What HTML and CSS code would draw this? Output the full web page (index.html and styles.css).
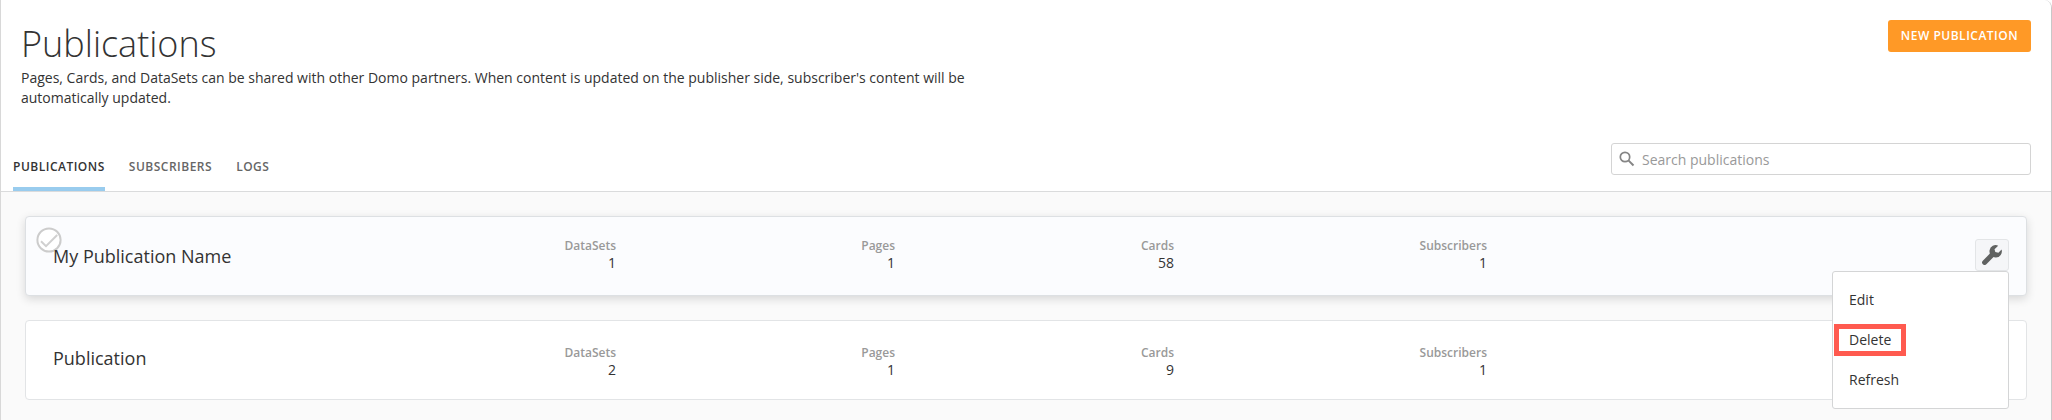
FILE: index.html
```html
<!DOCTYPE html>
<html lang="en">
<head>
<meta charset="utf-8">
<title>Publications</title>
<link rel="stylesheet" href="styles.css">
</head>
<body>
<main class="panel">
  <header class="header">
    <div class="intro">
      <h1 class="title">Publications</h1>
      <p class="description">Pages, Cards, and DataSets can be shared with other Domo partners. When content is updated on the publisher side, subscriber's content will be automatically updated.</p>
    </div>
    <nav class="tabs">
      <a class="tab tab-active">PUBLICATIONS</a>
      <a class="tab">SUBSCRIBERS</a>
      <a class="tab">LOGS</a>
    </nav>
    <div class="actions">
      <button class="new-button">NEW PUBLICATION</button>
      <label class="search">
        <svg class="search-icon" viewBox="0 0 16 16" width="16" height="16"><circle cx="6" cy="6" r="4.7" fill="none" stroke="#858585" stroke-width="1.7"/><path d="M9.4 9.4 14.5 14.5" stroke="#858585" stroke-width="2"/></svg>
        <input class="search-input" type="text" placeholder="Search publications">
      </label>
    </div>
  </header>
  <section class="list">
    <article class="card card-hover">
      <svg class="check" viewBox="0 0 26 26" width="26" height="26"><circle cx="13" cy="13" r="11.6" fill="#fff" stroke="#ccc" stroke-width="2"/><path d="M5 14.2 10 19.2 21.2 8" fill="none" stroke="#d0d0d0" stroke-width="2"/></svg>
      <h2 class="name">My Publication Name</h2>
      <dl class="stat"><dt>DataSets</dt><dd>1</dd></dl>
      <dl class="stat"><dt>Pages</dt><dd>1</dd></dl>
      <dl class="stat"><dt>Cards</dt><dd>58</dd></dl>
      <dl class="stat"><dt>Subscribers</dt><dd>1</dd></dl>
      <div class="tools">
        <button class="wrench-button" aria-label="Options">
          <svg viewBox="0 0 20 20" width="20" height="20"><path d="M2.6 17.4 10.5 9.5" stroke="#606261" stroke-width="5" stroke-linecap="round"/><path d="M16.2.7A6.2 6.2 0 1 0 19.6 4.600L16.400 7.800 13.300 7 12.500 4.200Z" fill="#606261"/></svg>
        </button>
        <div class="menu">
          <a class="menu-item">Edit</a>
          <a class="menu-item menu-marked">Delete</a>
          <a class="menu-item">Refresh</a>
        </div>
      </div>
    </article>
    <article class="card">
      <h2 class="name">Publication</h2>
      <dl class="stat"><dt>DataSets</dt><dd>2</dd></dl>
      <dl class="stat"><dt>Pages</dt><dd>1</dd></dl>
      <dl class="stat"><dt>Cards</dt><dd>9</dd></dl>
      <dl class="stat"><dt>Subscribers</dt><dd>1</dd></dl>
    </article>
  </section>
</main>
</body>
</html>
```
FILE: styles.css
```css
*, *::after { box-sizing: border-box; }
body { margin: 0; background: #fff; color: #333; font: 14px/20px "Open Sans", sans-serif; }
h1, h2, p, dl, dd { margin: 0; }
button { font-family: inherit; }

.panel { height: 420px; overflow: hidden; border-left: 1px solid #d8d8d8; border-right: 1px solid #c8c8c8; border-top-right-radius: 8px; background: #fafafa; }

.header { display: grid; grid-template-columns: 1fr 420px; grid-template-rows: 1fr auto; height: 192px; padding-right: 20px; border-bottom: 1px solid #dadbdc; background: #fff; }
.intro { padding: 19px 0 0 20px; }
.title { font-size: 36px; font-weight: 300; line-height: 49px; }
.description { width: 960px; }
.tabs { grid-row: 2; display: flex; align-items: flex-end; gap: 24px; padding-left: 12px; }
.tab { height: 34px; border-bottom: 4px solid transparent; color: #666; font-size: 12px; font-weight: 600; letter-spacing: 0.5px; }
.tab-active { border-bottom-color: #99ccee; color: #333; }
.actions { grid-column: 2; grid-row: 1 / 3; display: flex; flex-direction: column; align-items: flex-end; justify-content: space-between; padding: 20px 0 16px; }
.new-button { width: 143px; height: 32px; padding: 0 0 1px; border: 0; border-radius: 3px; background: #ff9926; color: #fff; font-size: 12px; font-weight: 600; letter-spacing: 0.5px; }
.search { display: flex; align-items: center; width: 420px; height: 32px; padding-left: 7px; border: 1px solid #d4d4d4; border-radius: 3px; }
.search-input { flex: 1; padding: 2px 0 0 7px; border: 0; background: none; font: inherit; outline: none; }
.search-input::placeholder { color: #999; }

.list { display: flex; flex-direction: column; gap: 24px; padding: 24px 24px 0; }
.card { position: relative; display: grid; grid-template-columns: 284px 279px 279px 279px 313px 1fr; height: 80px; padding: 23px 17px 0 27px; border: 1px solid #e2e4e6; border-radius: 4px; background: #fff; }
.card-hover { padding-top: 20px; border-color: #dde0e3; background: #fbfcfe; box-shadow: 0 3px 10px rgba(0, 0, 0, 0.14); z-index: 1; }
.check { position: absolute; left: 9.5px; top: 9.5px; }
.name { position: relative; padding-top: 2px; font-size: 18px; font-weight: 400; line-height: 24px; }
.card-hover .name { padding-top: 7px; }
.stat { text-align: right; line-height: 18px; }
.stat dt { color: #999; font-size: 12px; font-weight: 600; line-height: 17px; }

.tools { position: relative; justify-self: end; margin-top: 2px; }
.wrench-button { display: flex; align-items: center; justify-content: center; width: 34px; height: 32px; padding: 0; border: 1px solid #e3e5e7; border-radius: 3px; background: #f5f6f8; }
.menu { position: absolute; right: 0; top: 32px; width: 177px; height: 138px; padding: 8px 0; border: 1px solid #d4d5d6; border-radius: 3px; background: #fff; }
.menu-item { position: relative; display: block; padding: 0 16px; line-height: 40px; }
.menu-marked::after { content: ""; position: absolute; left: 1px; top: 4px; width: 72px; height: 32px; border: 5px solid #ff5a4f; }
```
